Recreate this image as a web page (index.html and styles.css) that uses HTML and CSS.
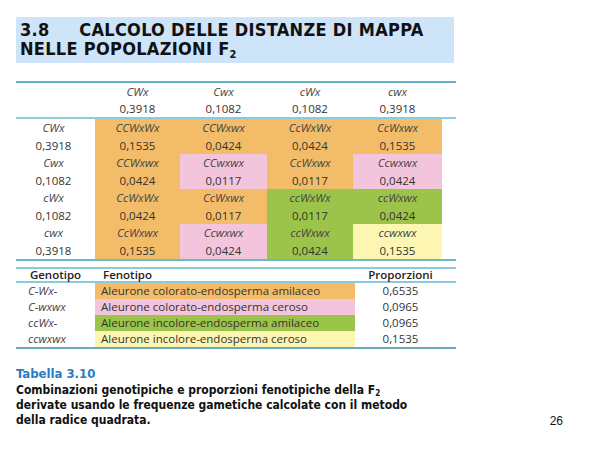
FILE: index.html
```html
<!DOCTYPE html>
<html lang="it">
<head>
<meta charset="utf-8">
<title>3.8 Calcolo delle distanze di mappa</title>
<link rel="stylesheet" href="styles.css">
</head>
<body>
<div class="slide">
  <div class="title">3.8&nbsp;&nbsp;&nbsp;&nbsp; CALCOLO DELLE DISTANZE DI MAPPA<br>NELLE POPOLAZIONI F<sub>2</sub></div>

  <table class="punnett">
    <colgroup>
      <col class="c-lab"><col class="c2"><col class="c3"><col class="c4"><col class="c5"><col class="c-pad">
    </colgroup>
    <thead>
      <tr>
        <th></th>
        <th><div class="g">CWx</div><div>0,3918</div></th>
        <th><div class="g">Cwx</div><div>0,1082</div></th>
        <th><div class="g">cWx</div><div>0,1082</div></th>
        <th><div class="g">cwx</div><div>0,3918</div></th>
        <th></th>
      </tr>
    </thead>
    <tbody>
      <tr>
        <td class="lab"><div class="g">CWx</div><div>0,3918</div></td>
        <td class="or"><div class="g">CCWxWx</div><div>0,1535</div></td>
        <td class="or"><div class="g">CCWxwx</div><div>0,0424</div></td>
        <td class="or"><div class="g">CcWxWx</div><div>0,0424</div></td>
        <td class="or"><div class="g">CcWxwx</div><div>0,1535</div></td>
        <td></td>
      </tr>
      <tr>
        <td class="lab"><div class="g">Cwx</div><div>0,1082</div></td>
        <td class="or"><div class="g">CCWxwx</div><div>0,0424</div></td>
        <td class="pk"><div class="g">CCwxwx</div><div>0,0117</div></td>
        <td class="or"><div class="g">CcWxwx</div><div>0,0117</div></td>
        <td class="pk"><div class="g">Ccwxwx</div><div>0,0424</div></td>
        <td></td>
      </tr>
      <tr>
        <td class="lab"><div class="g">cWx</div><div>0,1082</div></td>
        <td class="or"><div class="g">CcWxWx</div><div>0,0424</div></td>
        <td class="or"><div class="g">CcWxwx</div><div>0,0117</div></td>
        <td class="gr"><div class="g">ccWxWx</div><div>0,0117</div></td>
        <td class="gr"><div class="g">ccWxwx</div><div>0,0424</div></td>
        <td></td>
      </tr>
      <tr>
        <td class="lab"><div class="g">cwx</div><div>0,3918</div></td>
        <td class="or"><div class="g">CcWxwx</div><div>0,1535</div></td>
        <td class="pk"><div class="g">Ccwxwx</div><div>0,0424</div></td>
        <td class="gr"><div class="g">ccWxwx</div><div>0,0424</div></td>
        <td class="ye"><div class="g">ccwxwx</div><div>0,1535</div></td>
        <td></td>
      </tr>
    </tbody>
  </table>

  <table class="pheno">
    <colgroup>
      <col class="p1"><col class="p2"><col class="p3">
    </colgroup>
    <thead>
      <tr><th class="h1">Genotipo</th><th class="h2">Fenotipo</th><th class="h3">Proporzioni</th></tr>
    </thead>
    <tbody>
      <tr><td class="gen">C-Wx-</td><td class="fen or">Aleurone colorato-endosperma amilaceo</td><td class="num">0,6535</td></tr>
      <tr><td class="gen">C-wxwx</td><td class="fen pk">Aleurone colorato-endosperma ceroso</td><td class="num">0,0965</td></tr>
      <tr><td class="gen">ccWx-</td><td class="fen gr">Aleurone incolore-endosperma amilaceo</td><td class="num">0,0965</td></tr>
      <tr><td class="gen">ccwxwx</td><td class="fen ye">Aleurone incolore-endosperma ceroso</td><td class="num">0,1535</td></tr>
    </tbody>
  </table>

  <div class="footer">
    <div class="caption">
      <div class="cap-title">Tabella 3.10</div>
      <div class="cap-text">Combinazioni genotipiche e proporzioni fenotipiche della F<sub>2</sub><br>derivate usando le frequenze gametiche calcolate con il metodo<br>della radice quadrata.</div>
    </div>
    <div class="pagenum">26</div>
  </div>
</div>
</body>
</html>
```

FILE: styles.css
```css
html, body {
  margin: 0;
  padding: 0;
  background: #ffffff;
}

.slide {
  width: 600px;
  height: 450px;
  padding: 17px 0 0 16px;
  box-sizing: border-box;
  font-family: "Open Sans", "Noto Sans", sans-serif;
}

.title {
  width: 438px;
  height: 46px;
  box-sizing: border-box;
  background: #cde4f9;
  padding: 3px 0 0 4px;
  font-family: "DejaVu Sans Condensed", "DejaVu Sans", sans-serif;
  font-weight: bold;
  font-size: 18px;
  line-height: 19px;
  letter-spacing: 0.3px;
  color: #111111;
}

.title sub {
  font-size: 11px;
  vertical-align: -3px;
  line-height: 0;
}

/* Punnett table */
.punnett {
  margin-top: 18px;
  width: 440px;
  border-collapse: collapse;
  table-layout: fixed;
  font-size: 11.5px;
  color: #333333;
  border-top: 2px solid #62b3c6;
  border-bottom: 2px solid #6ab8cb;
}

.c-lab { width: 79px; }
.c2 { width: 85px; }
.c3 { width: 87px; }
.c4 { width: 86px; }
.c5 { width: 89px; }
.c-pad { width: 14px; }

.punnett th {
  font-weight: normal;
  padding: 1px 0 0 0;
  text-align: center;
  line-height: 16.5px;
}

.punnett thead tr {
  border-bottom: 2px solid #8fcadb;
}

.punnett td {
  padding: 0;
  text-align: center;
  line-height: 17.5px;
}

.punnett .lab {
  padding-right: 4px;
}

.punnett .g {
  font-style: italic;
  color: #444444;
}

.or { background: #f3bc68; }
.pk { background: #f2c5dd; }
.gr { background: #9dc44a; }
.ye { background: #fdf5b2; }

/* Phenotype table */
.pheno {
  margin-top: 6px;
  width: 440px;
  border-collapse: collapse;
  table-layout: fixed;
  font-size: 11.5px;
  color: #333333;
  border-top: 2px solid #8ccadb;
  border-bottom: 2px solid #6aa9bf;
}

.p1 { width: 79px; }
.p2 { width: 260px; }
.p3 { width: 101px; }

.pheno thead tr {
  border-bottom: 2px solid #8ccadb;
}

.pheno th {
  font-weight: 600;
  color: #222222;
  line-height: 12px;
  padding: 0;
}

.pheno .h1 { text-align: center; }
.pheno .h2 { text-align: left; padding-left: 8px; }
.pheno .h3 { text-align: center; padding-right: 10px; }

.pheno td {
  line-height: 16px;
  padding: 0;
}

.pheno .gen {
  font-style: italic;
  color: #444444;
  padding-left: 12px;
}

.pheno .fen {
  padding-left: 6px;
}

.pheno .num {
  text-align: center;
  padding-right: 10px;
}

/* Footer */
.footer {
  margin-top: 16px;
  width: 570px;
  display: flex;
  justify-content: space-between;
  align-items: flex-end;
}

.caption {
  font-family: "DejaVu Sans Condensed", "DejaVu Sans", sans-serif;
  font-weight: bold;
  font-size: 12px;
  line-height: 15px;
}

.cap-title {
  color: #2a7cc4;
  font-size: 13px;
  line-height: 17px;
  margin-bottom: 1px;
}

.cap-text {
  color: #111111;
}

.cap-text sub {
  font-size: 8px;
  vertical-align: -2px;
  line-height: 0;
}

.pagenum {
  font-family: "Liberation Sans", Arial, sans-serif;
  font-size: 12px;
  color: #111111;
  margin-right: 23px;
}
```
